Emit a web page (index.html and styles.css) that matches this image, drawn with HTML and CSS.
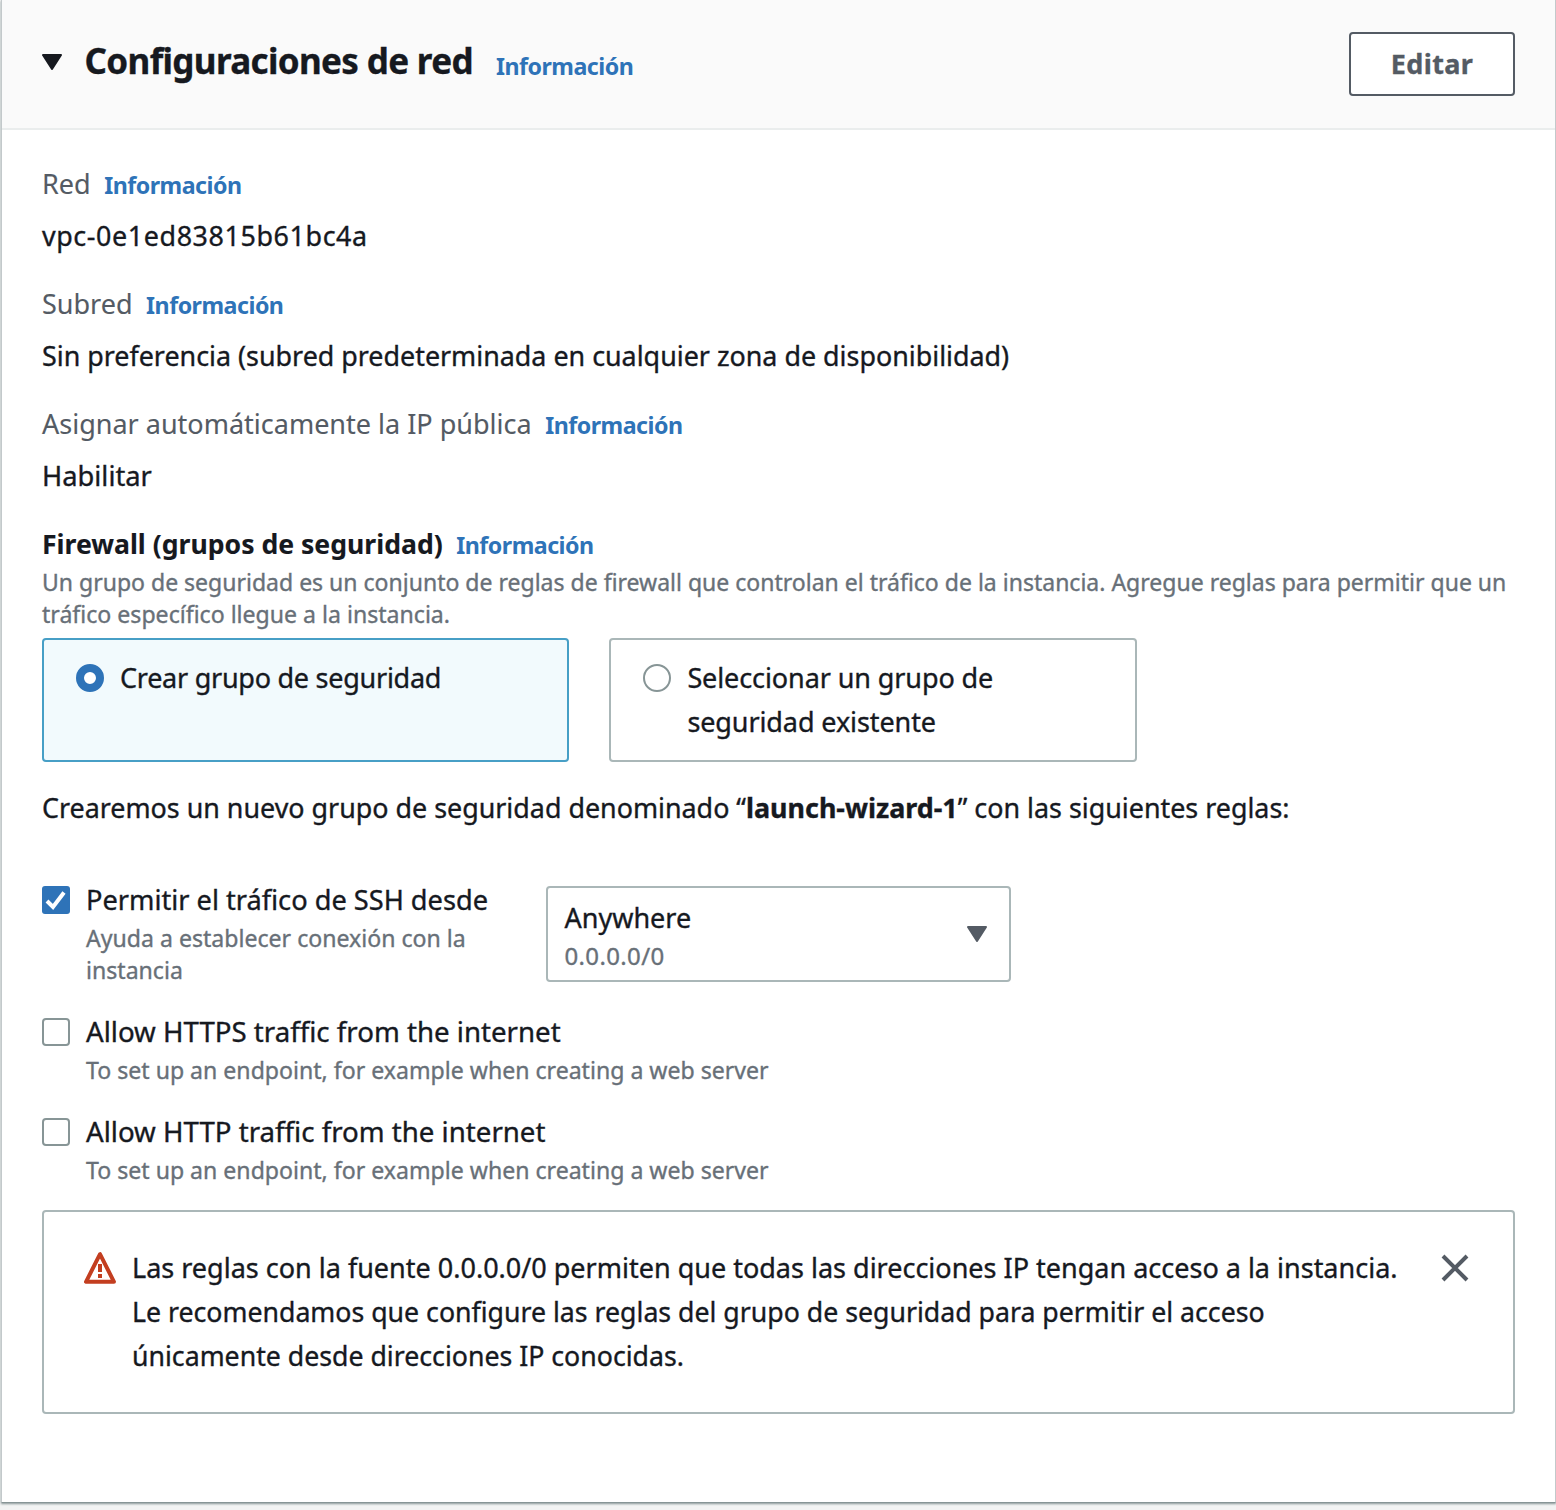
FILE: index.html
```html
<!DOCTYPE html>
<html lang="es">
<head>
<meta charset="utf-8">
<title>Configuraciones de red</title>
<link rel="stylesheet" href="styles.css">
</head>
<body>
<section class="card">
  <header class="card-header">
    <div class="heading">
      <svg class="caret" width="20" height="16" viewBox="0 0 20 16"><path d="M1 1h18l-9 14z" fill="#16191f" stroke="#16191f" stroke-width="2" stroke-linejoin="round"/></svg>
      <h2 class="title">Configuraciones de red</h2>
    </div>
    <a class="info info-title">Información</a>
    <button class="edit">Editar</button>
  </header>
  <div class="card-body">
    <div class="field">
      <div class="label-row"><span class="label">Red</span><a class="info">Información</a></div>
      <div class="value vpc">vpc-0e1ed83815b61bc4a</div>
    </div>
    <div class="field">
      <div class="label-row"><span class="label">Subred</span><a class="info">Información</a></div>
      <div class="value">Sin preferencia (subred predeterminada en cualquier zona de disponibilidad)</div>
    </div>
    <div class="field">
      <div class="label-row"><span class="label">Asignar automáticamente la IP pública</span><a class="info">Información</a></div>
      <div class="value short">Habilitar</div>
    </div>
    <div class="label-row"><span class="label strong">Firewall (grupos de seguridad)</span><a class="info">Información</a></div>
    <p class="hint"><span class="hint-long">Un grupo de seguridad es un conjunto de reglas de firewall que controlan el tráfico de la instancia. Agregue reglas para permitir que un</span><br>tráfico específico llegue a la instancia.</p>
    <div class="tiles">
      <div class="tile selected"><span class="radio checked"></span><span class="tile-name">Crear grupo de seguridad</span></div>
      <div class="tile"><span class="radio"></span><span class="tile-name wide">Seleccionar un grupo de<br>seguridad existente</span></div>
    </div>
    <p class="sentence">Crearemos un nuevo grupo de seguridad denominado “<b>launch-wizard-1</b>” con las siguientes reglas:</p>
    <div class="rule rule-ssh">
      <svg class="checkbox" width="28" height="28" viewBox="0 0 28 28"><rect width="28" height="28" rx="3" fill="#2e73b8"/><path d="M5 15l6 6L22 6.500" fill="none" stroke="#fff" stroke-width="4"/></svg>
      <div class="rule-text"><div class="rule-name ssh">Permitir el tráfico de SSH desde</div><p class="hint">Ayuda a establecer conexión con la<br>instancia</p></div>
      <div class="select">
        <div><div class="select-name">Anywhere</div><div class="select-value">0.0.0.0/0</div></div>
        <svg class="caret" width="20" height="16" viewBox="0 0 20 16"><path d="M1 1h18l-9 14z" fill="#545b64" stroke="#545b64" stroke-width="2" stroke-linejoin="round"/></svg>
      </div>
    </div>
    <div class="rule">
      <span class="checkbox empty"></span>
      <div class="rule-text"><div class="rule-name">Allow HTTPS traffic from the internet</div><p class="hint">To set up an endpoint, for example when creating a web server</p></div>
    </div>
    <div class="rule">
      <span class="checkbox empty"></span>
      <div class="rule-text"><div class="rule-name">Allow HTTP traffic from the internet</div><p class="hint">To set up an endpoint, for example when creating a web server</p></div>
    </div>
    <div class="alert">
      <svg class="warn" width="32" height="32" viewBox="0 0 32 32"><path d="M16 2.200L2 29.800h28z" fill="none" stroke="#c33e20" stroke-width="4" stroke-linejoin="round"/><path d="M16 12v8M16 22v4" stroke="#c33e20" stroke-width="4"/></svg>
      <p class="alert-text">Las reglas con la fuente 0.0.0.0/0 permiten que todas las direcciones IP tengan acceso a la instancia.<br><span class="advice">Le recomendamos que configure las reglas del grupo de seguridad para permitir el acceso<br>únicamente desde direcciones IP conocidas.</span></p>
      <svg class="close" width="28" height="28" viewBox="0 0 28 28"><path d="M2 2l24 24M26 2L2 26" stroke="#545b64" stroke-width="4"/></svg>
    </div>
  </div>
</section>
</body>
</html>
```
FILE: styles.css
```css
* { box-sizing: border-box; }
body {
  margin: 0;
  height: 1510px;
  overflow: hidden;
  background: #f2f3f3;
  color: #16191f;
  font-family: "Noto Sans", "Open Sans", sans-serif;
  font-size: 27px;
  line-height: 44px;
  font-stretch: 87.5%;
  white-space: nowrap;
  -webkit-text-stroke: 0.35px currentColor;
}
p, h2 { margin: 0; }
.card {
  width: 1555px;
  height: 1503px;
  margin-left: 1px;
  background: #fff;
  border-left: 1px solid #c3c9cb;
  border-right: 1px solid #c3c9cb;
  border-bottom: 1px solid #879596;
  box-shadow: 0 1px 2px #879596;
}
.card-header {
  display: flex;
  align-items: center;
  height: 130px;
  padding: 0 40px;
  background: #fafafa;
  border-bottom: 2px solid #eaeded;
}
.heading { display: flex; align-items: center; height: 44px; margin-bottom: 4px; }
.title { margin: 0 0 2px 22.5px; font-size: 35px; font-weight: 700; line-height: 44px; letter-spacing: -0.65px; }
.info {
  margin-left: 13.5px;
  color: #2e73b8;
  font-size: 23.2px;
  font-weight: 700;
  letter-spacing: -0.5px;
  -webkit-text-stroke: 0;
}
.info-title { margin: 4px 0 0 23px; }
.edit {
  width: 166px;
  height: 64px;
  margin-left: auto;
  padding: 0;
  border: 2px solid #545b64;
  border-radius: 4px;
  background: #fff;
  color: #545b64;
  font: inherit;
  font-weight: 700;
  letter-spacing: 0.35px;
}
.card-body { padding: 32px 40px; }
.field { margin-bottom: 24px; }
.label-row { display: flex; align-items: baseline; height: 44px; }
.label { color: #545b64; -webkit-text-stroke: 0.1px currentColor; }
.label.strong { color: #16191f; font-size: 26.6px; font-weight: 700; }
.value { margin-top: 8px; font-size: 26.87px; }
.value.short { font-size: 27.3px; }
.vpc { letter-spacing: 0.6px; }
.hint { color: #687078; font-size: 23.1px; line-height: 32px; }
.hint-long { font-size: 23.03px; }
.tiles { display: flex; gap: 40px; margin-top: 8px; }
.tile {
  display: flex;
  gap: 16px;
  width: 527.4px;
  height: 124px;
  padding: 16px 32px;
  border: 2px solid #aab7b8;
  border-radius: 4px;
}
.tile.selected { border-color: #479fc6; background: #f2fafd; }
.tile-name { letter-spacing: -0.26px; }
.tile-name.wide { letter-spacing: -0.1px; }
.radio { flex: none; width: 28px; height: 28px; margin-top: 8px; border: 2px solid #879596; border-radius: 50%; }
.radio.checked { border: 8px solid #2e73b8; background: #fff; }
.sentence { margin: 24px 0 48px; font-size: 26.87px; }
.rule { display: flex; margin-bottom: 24px; }
.rule-ssh { height: 108px; }
.rule-name { height: 44px; font-size: 27.65px; line-height: 42px; }
.rule-name.ssh { font-size: 27.2px; line-height: 44px; }
.checkbox { flex: none; width: 28px; height: 28px; margin: 8px 16px 0 0; }
.checkbox.empty { border: 2px solid #879596; border-radius: 4px; }
.rule-text { width: 460px; }
.select {
  display: flex;
  justify-content: space-between;
  align-items: center;
  width: 465px;
  height: 96px;
  margin-top: 8px;
  padding: 0 22px 0 16.5px;
  border: 2px solid #aab7b8;
  border-radius: 4px;
}
.select-value { color: #687078; font-size: 24px; line-height: 32px; letter-spacing: 0.35px; }
.alert {
  display: flex;
  height: 204px;
  padding: 34px 44px 34px 40px;
  border: 2px solid #aab7b8;
  border-radius: 4px;
}
.advice { font-size: 26.7px; }
.warn { flex: none; margin: 6px 16px 0 0; }
.close { flex: none; margin: 8px 0 0 auto; }
```
